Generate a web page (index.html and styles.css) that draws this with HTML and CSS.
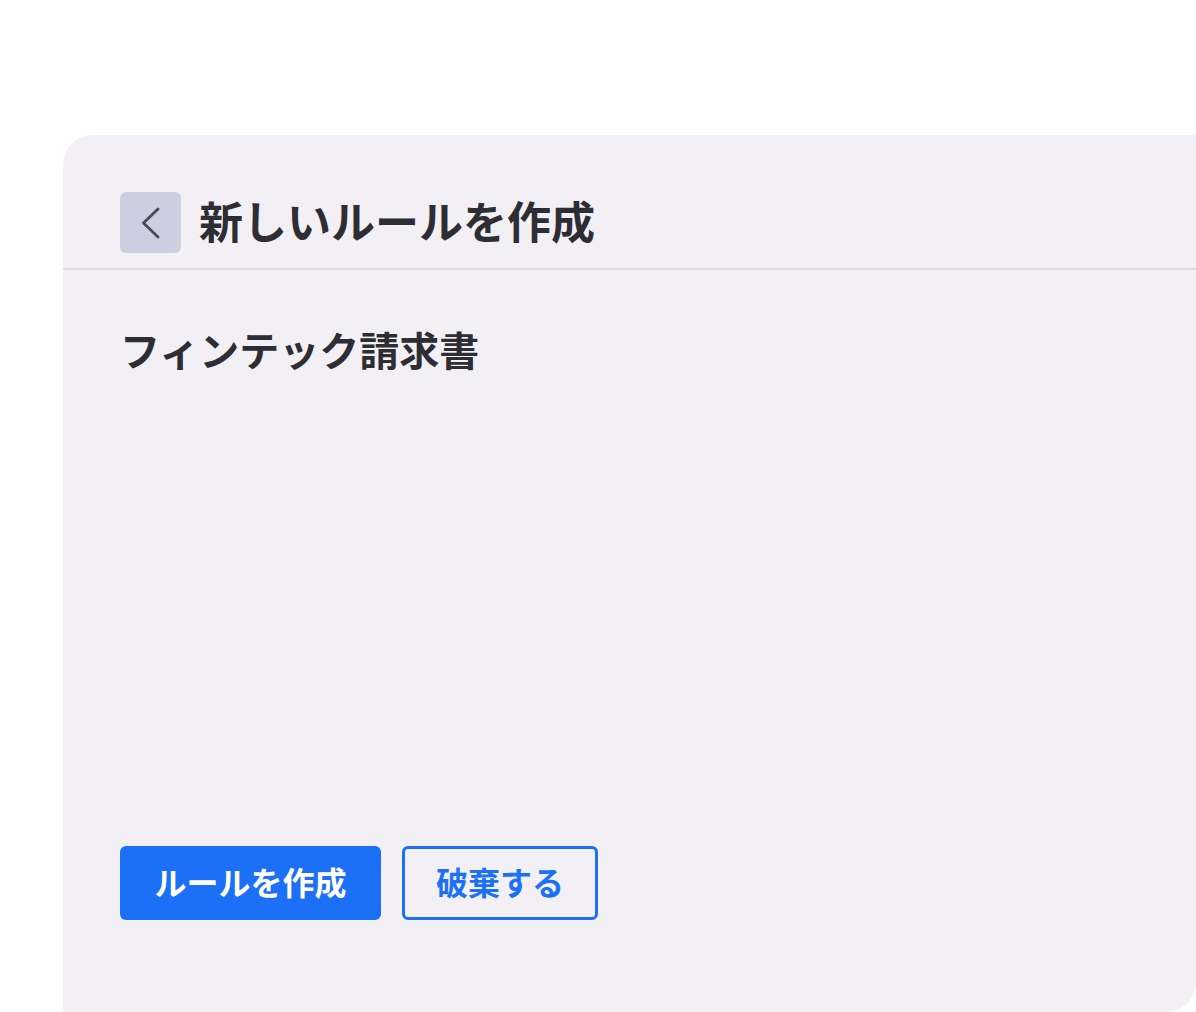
FILE: index.html
```html
<!DOCTYPE html>
<html lang="ja">
<head>
    <meta charset="UTF-8">
    <meta name="viewport" content="width=device-width, initial-scale=1.0">
    <title>新しいルールを作成</title>
    <link rel="stylesheet" href="styles.css">
</head>
<body>
    <div class="panel">
        <div class="panel-header">
            <button class="back-btn" aria-label="戻る">
                <svg width="61" height="61" viewBox="0 0 61 61">
                    <path d="M38 17 L23.5 31 L38 45" fill="none" stroke="#4a4a58" stroke-width="2.8" stroke-linecap="round" stroke-linejoin="round"/>
                </svg>
            </button>
            <h1>新しいルールを作成</h1>
        </div>
        <div class="panel-body">
            <h2>フィンテック請求書</h2>
            <div class="actions">
                <button class="btn btn-primary">ルールを作成</button>
                <button class="btn btn-outline">破棄する</button>
            </div>
        </div>
    </div>
</body>
</html>
```

FILE: styles.css
```css
body {
    margin: 0;
    background: #ffffff;
    font-family: "Noto Sans CJK JP", "Noto Sans", sans-serif;
    color: #2e2d33;
}
.panel {
    margin: 135px 0 0 63px;
    height: 877px;
    background: #f2f0f5;
    border-radius: 30px 0 30px 0;
    display: flex;
    flex-direction: column;
}
.panel-header {
    display: flex;
    align-items: center;
    gap: 18px;
    padding: 57px 57px 15px;
    border-bottom: 2px solid #dddbe1;
}
.back-btn {
    width: 61px;
    height: 61px;
    border: none;
    border-radius: 6px;
    background: #cdcee0;
    display: flex;
    align-items: center;
    justify-content: center;
    padding: 0;
}
.back-btn svg {
    display: block;
}
h1 {
    margin: 0;
    padding-bottom: 5px;
    font-size: 44px;
    font-weight: 700;
    line-height: 1;
}
.panel-body {
    flex: 1;
    display: flex;
    flex-direction: column;
    padding: 55px 57px 92px;
}
h2 {
    margin: 0;
    font-size: 40px;
    font-weight: 700;
    line-height: 1.2;
}
.actions {
    margin-top: auto;
    display: flex;
    gap: 21px;
}
.btn {
    height: 74px;
    padding: 0 0 4px;
    border-radius: 6px;
    font-family: inherit;
    font-size: 32px;
    font-weight: 700;
    cursor: pointer;
}
.btn-primary {
    width: 261px;
    background: #1c70f7;
    color: #ffffff;
    border: none;
}
.btn-outline {
    width: 196px;
    background: transparent;
    color: #1c70f7;
    border: 3px solid #1c70f7;
}
```
